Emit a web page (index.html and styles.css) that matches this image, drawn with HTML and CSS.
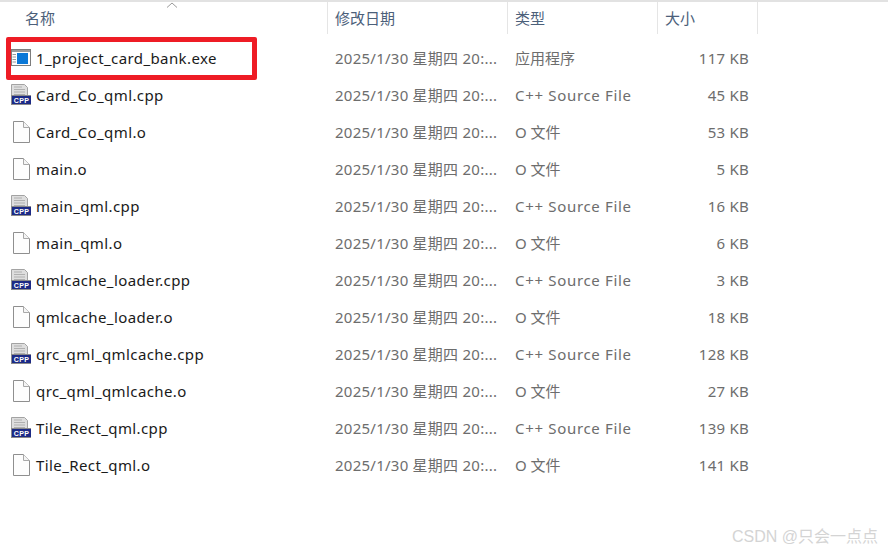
FILE: index.html
```html
<!DOCTYPE html>
<html lang="zh">
<head>
<meta charset="utf-8">
<title>文件列表</title>
<link rel="stylesheet" href="styles.css">
</head>
<body>
<svg class="defs" width="0" height="0" aria-hidden="true">
  <defs>
    <symbol id="blank" viewBox="0 0 20 24">
      <path d="M2.5 1.5H12.5L18.5 7.5V22.5H2.5Z" fill="#fdfdfd" stroke="#8f8f8f"/>
      <path d="M12.5 1.5V7.5H18.5" fill="#f4f4f4" stroke="#a8a8a8"/>
    </symbol>
    <symbol id="cpp" viewBox="0 0 20 21">
      <path d="M.5.5H13.500L16.500 3.500V12H.5Z" fill="#dedede" stroke="#a3a3a3"/>
      <path d="M3 3H11M3 5.5H14M3 8H14M3 10.500H14" stroke="#b0b0b0"/>
      <rect x="0" y="11" width="20" height="10" fill="#8a8a8a"/>
      <rect x="1" y="12" width="19" height="8" fill="#1c2a86"/>
      <text class="cpp-label" x="10.500" y="18.500" text-anchor="middle">CPP</text>
    </symbol>
    <symbol id="exe" viewBox="0 0 20 18">
      <rect x=".5" y=".5" width="19" height="16" fill="#fdfdfd" stroke="#7d7d7d"/>
      <rect x="1" y="1" width="18" height="2" fill="#9a9a9a"/>
      <rect x="6" y="4" width="11" height="11" fill="#0a78d7"/>
      <path d="M1.500 5.500H5M1.500 8H5M1.500 10.500H5M1.500 13H5" stroke="#9a9a9a"/>
    </symbol>
  </defs>
</svg>

<div class="list">
  <div class="row head">
    <div class="cell"><span class="sort"><svg width="14" height="6" viewBox="0 0 14 6"><path d="M2 5.500L7 1L12 5.500" fill="none" stroke="#9a9a9a"/></svg></span>名称</div>
    <div class="cell">修改日期</div>
    <div class="cell">类型</div>
    <div class="cell">大小</div>
  </div>

  <div class="row">
    <div class="cell name"><svg class="icon exe"><use href="#exe"/></svg>1_project_card_bank.exe</div>
    <div class="cell date">2025/1/30 星期四 20:...</div><div class="cell">应用程序</div><div class="cell size">117 KB</div>
  </div>
  <div class="row">
    <div class="cell name"><svg class="icon cpp"><use href="#cpp"/></svg>Card_Co_qml.cpp</div>
    <div class="cell date">2025/1/30 星期四 20:...</div><div class="cell src">C++ Source File</div><div class="cell size">45 KB</div>
  </div>
  <div class="row">
    <div class="cell name"><svg class="icon blank"><use href="#blank"/></svg>Card_Co_qml.o</div>
    <div class="cell date">2025/1/30 星期四 20:...</div><div class="cell">O 文件</div><div class="cell size">53 KB</div>
  </div>
  <div class="row">
    <div class="cell name"><svg class="icon blank"><use href="#blank"/></svg>main.o</div>
    <div class="cell date">2025/1/30 星期四 20:...</div><div class="cell">O 文件</div><div class="cell size">5 KB</div>
  </div>
  <div class="row">
    <div class="cell name"><svg class="icon cpp"><use href="#cpp"/></svg>main_qml.cpp</div>
    <div class="cell date">2025/1/30 星期四 20:...</div><div class="cell src">C++ Source File</div><div class="cell size">16 KB</div>
  </div>
  <div class="row">
    <div class="cell name"><svg class="icon blank"><use href="#blank"/></svg>main_qml.o</div>
    <div class="cell date">2025/1/30 星期四 20:...</div><div class="cell">O 文件</div><div class="cell size">6 KB</div>
  </div>
  <div class="row">
    <div class="cell name"><svg class="icon cpp"><use href="#cpp"/></svg>qmlcache_loader.cpp</div>
    <div class="cell date">2025/1/30 星期四 20:...</div><div class="cell src">C++ Source File</div><div class="cell size">3 KB</div>
  </div>
  <div class="row">
    <div class="cell name"><svg class="icon blank"><use href="#blank"/></svg>qmlcache_loader.o</div>
    <div class="cell date">2025/1/30 星期四 20:...</div><div class="cell">O 文件</div><div class="cell size">18 KB</div>
  </div>
  <div class="row">
    <div class="cell name"><svg class="icon cpp"><use href="#cpp"/></svg>qrc_qml_qmlcache.cpp</div>
    <div class="cell date">2025/1/30 星期四 20:...</div><div class="cell src">C++ Source File</div><div class="cell size">128 KB</div>
  </div>
  <div class="row">
    <div class="cell name"><svg class="icon blank"><use href="#blank"/></svg>qrc_qml_qmlcache.o</div>
    <div class="cell date">2025/1/30 星期四 20:...</div><div class="cell">O 文件</div><div class="cell size">27 KB</div>
  </div>
  <div class="row">
    <div class="cell name"><svg class="icon cpp"><use href="#cpp"/></svg>Tile_Rect_qml.cpp</div>
    <div class="cell date">2025/1/30 星期四 20:...</div><div class="cell src">C++ Source File</div><div class="cell size">139 KB</div>
  </div>
  <div class="row">
    <div class="cell name"><svg class="icon blank"><use href="#blank"/></svg>Tile_Rect_qml.o</div>
    <div class="cell date">2025/1/30 星期四 20:...</div><div class="cell">O 文件</div><div class="cell size">141 KB</div>
  </div>
</div>

<div class="highlight"></div>
<div class="mark">CSDN @只会一点点</div>
</body>
</html>
```
FILE: styles.css
```css
html, body {
  margin: 0;
  height: 100%;
}
body {
  position: relative;
  width: 888px;
  height: 551px;
  overflow: hidden;
  background: #fff;
  font-family: "Noto Sans", "Noto Sans CJK SC", sans-serif;
  font-size: 15px;
  color: #6d6d6d;
}
.defs {
  position: absolute;
}
.list {
  border-top: 2px solid #e2e2e2;
}
.row {
  display: grid;
  grid-template-columns: 328px 180px 150px 100px;
  height: 37px;
  align-items: center;
}
.cell {
  padding-left: 7px;
  white-space: nowrap;
  overflow: hidden;
}
.head {
  height: 32px;
  margin-bottom: 5px;
  align-items: stretch;
  color: #4c607a;
  width: 758px;
}
.head .cell {
  display: flex;
  align-items: center;
  padding-bottom: 2px;
  border-right: 1px solid #e5e5e5;
}
.head .cell:first-child {
  padding-left: 25px;
  position: relative;
}
.sort {
  position: absolute;
  left: 165px;
  top: 0;
  line-height: 0;
}
.name {
  display: flex;
  align-items: center;
  padding-left: 11px;
  color: #1a1a1a;
  letter-spacing: .4px;
}
.date {
  letter-spacing: .25px;
}
.src {
  letter-spacing: .68px;
}
.icon {
  flex: none;
  width: 20px;
  margin-right: 5px;
}
.icon.blank { height: 24px; }
.icon.cpp { height: 21px; }
.icon.exe { height: 18px; }
.cpp-label {
  font-family: "Liberation Sans", sans-serif;
  font-size: 7px;
  font-weight: 700;
  fill: #fff;
}
.size {
  padding: 0 9px 0 0;
  text-align: right;
  letter-spacing: .25px;
}
.highlight {
  position: absolute;
  left: 6px;
  top: 37px;
  width: 241px;
  height: 33px;
  border: 5px solid #ee1c25;
  border-radius: 2px;
}
.mark {
  position: absolute;
  right: 10px;
  top: 523px;
  font-family: "Liberation Sans", "Noto Sans CJK SC", sans-serif;
  font-size: 16px;
  color: #d4d4d4;
}
```
